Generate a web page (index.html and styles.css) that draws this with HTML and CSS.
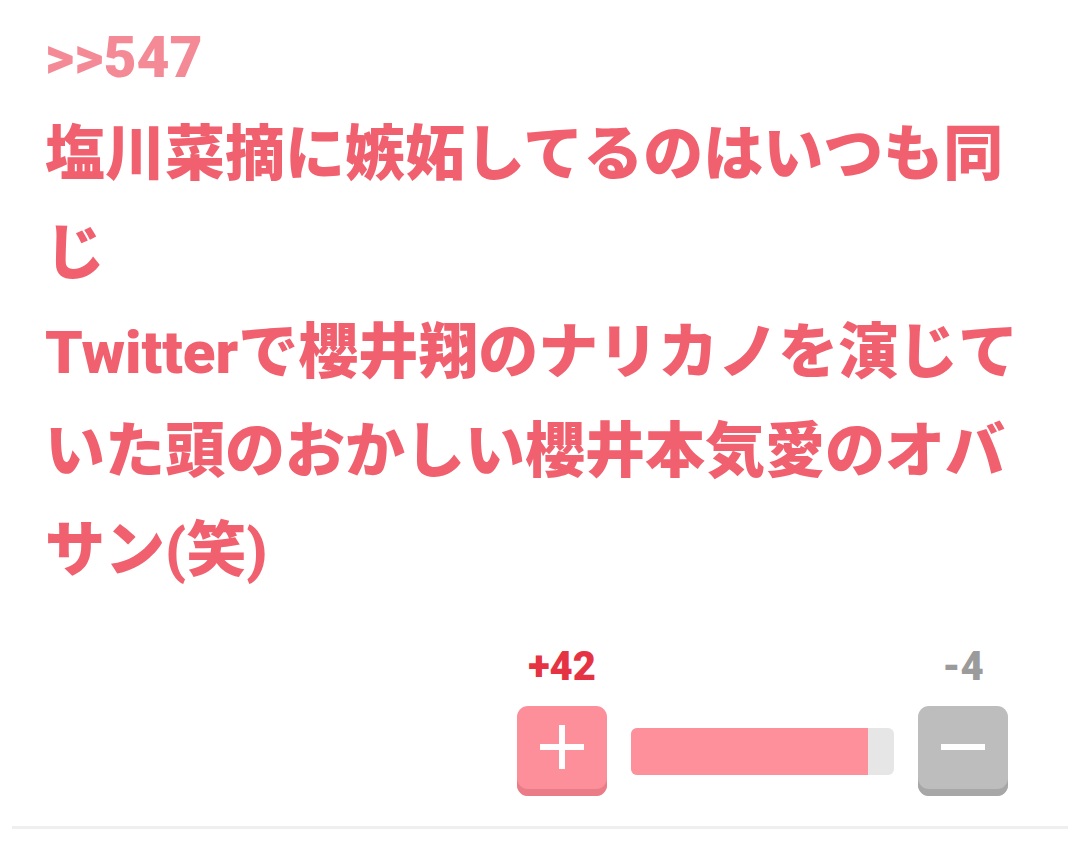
FILE: index.html
```html
<!DOCTYPE html>
<html lang="ja">
<head>
<meta charset="utf-8">
<link rel="stylesheet" href="styles.css">
</head>
<body>
<article class="post">
  <div class="anchor">&gt;&gt;547</div>
  <p class="body">塩川菜摘に嫉妬してるのはいつも同じ<br>Twitterで櫻井翔のナリカノを演じていた頭のおかしい櫻井本気愛のオバサン(笑)</p>
  <div class="vote">
    <div class="vote-col">
      <span class="count plus-count">+42</span>
      <button class="btn btn-plus" aria-label="plus">
        <svg width="44" height="44" viewBox="0 0 44 44"><path d="M22 1v42M1 22h42" stroke="#fff" stroke-width="6" stroke-linecap="round" fill="none"/></svg>
      </button>
    </div>
    <div class="bar"><div class="bar-fill" style="width:90%"></div></div>
    <div class="vote-col">
      <span class="count minus-count">-4</span>
      <button class="btn btn-minus" aria-label="minus">
        <svg width="44" height="44" viewBox="0 0 44 44"><path d="M1 22h42" stroke="#fff" stroke-width="6" stroke-linecap="round" fill="none"/></svg>
      </button>
    </div>
  </div>
</article>
<div class="divider"></div>
</body>
</html>
```

FILE: styles.css
```css
html, body {
  margin: 0;
  padding: 0;
  background: #ffffff;
}
body {
  width: 1080px;
  font-family: Roboto, "Noto Sans CJK JP", sans-serif;
}
.post {
  padding: 24px 45px 0 45px;
}
.anchor {
  font-size: 57px;
  font-weight: 900;
  line-height: 68px;
  color: #f58a97;
}
.body {
  margin: 13px 0 0 0;
  font-size: 60px;
  font-weight: 900;
  line-height: 99px;
  color: #f0606e;
}
.vote {
  display: flex;
  justify-content: flex-end;
  align-items: flex-end;
  gap: 24px;
  margin-top: 43px;
  padding-right: 27px;
}
.vote-col {
  display: flex;
  flex-direction: column;
  align-items: center;
  gap: 15px;
}
.count {
  font-size: 40px;
  font-weight: 900;
  line-height: 48px;
}
.plus-count { color: #e63343; }
.minus-count { color: #9b9b9b; }
.btn {
  width: 90px;
  height: 90px;
  border: none;
  border-radius: 11px;
  padding: 0 0 8px 0;
  display: flex;
  align-items: center;
  justify-content: center;
}
.btn-plus {
  background: #fc8f99;
  box-shadow: inset 0 -7px 0 #ea7c87;
}
.btn-minus {
  background: #bdbdbd;
  box-shadow: inset 0 -7px 0 #a7a7a7;
}
.bar {
  width: 263px;
  height: 47px;
  margin-bottom: 21px;
  border-radius: 6px;
  background: #e6e6e6;
  overflow: hidden;
}
.bar-fill {
  height: 100%;
  background: #fd909b;
}
.divider {
  margin: 30px 12px 0 12px;
  height: 3px;
  background: #efefef;
}
```
